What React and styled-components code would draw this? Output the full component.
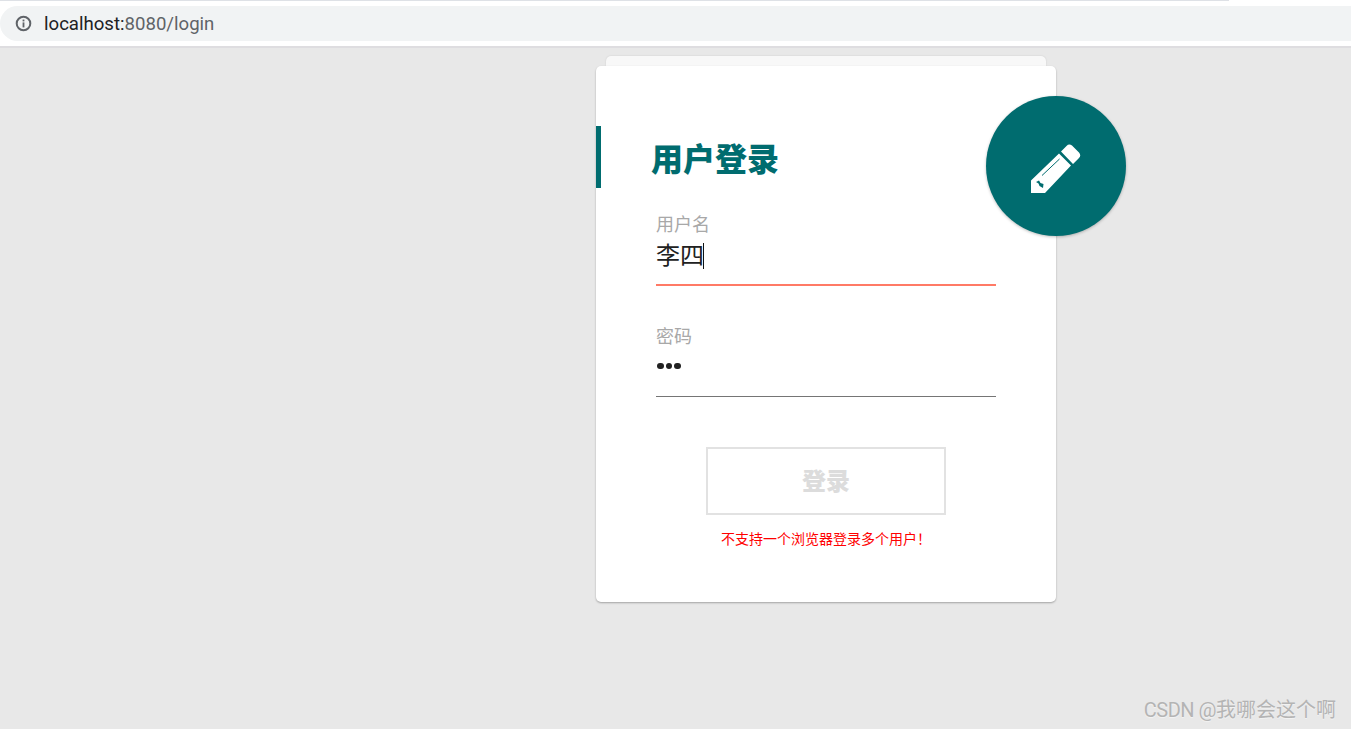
import React from 'react';
import styled, { createGlobalStyle } from 'styled-components';

const GlobalStyle = createGlobalStyle`
  html, body {
    margin: 0;
    padding: 0;
    height: 100%;
    background: #e8e8e8;
  }
  body {
    font-family: "Roboto", "Noto Sans CJK SC", sans-serif;
    overflow: hidden;
  }
`;

const Page = styled.div`
  position: relative;
  display: flex;
  flex-direction: column;
  height: 729px;
  background: #e8e8e8;
`;

const BrowserBar = styled.div`
  flex: none;
  height: 48px;
  box-sizing: border-box;
  background: #fff;
  border-bottom: 2px solid #dedde0;
  padding-top: 6px;
`;

const LoadLine = styled.div`
  position: absolute;
  top: 0;
  left: 0;
  width: 1229px;
  height: 1px;
  background: #dee1e6;
`;

const AddressPill = styled.div`
  display: flex;
  align-items: center;
  height: 35px;
  padding-left: 15px;
  background: #f1f3f4;
  border-radius: 18px 0 0 18px;
`;

const InfoIcon = styled.svg`
  width: 17px;
  height: 17px;
  margin-right: 12px;
`;

const Url = styled.span`
  font-family: "Roboto", sans-serif;
  font-size: 18.6px;
  color: #202124;
`;

const UrlRest = styled.span`
  color: #5f6368;
`;

const Main = styled.main`
  flex: 1;
  padding: 8px 0 0 596px;
`;

const CardStack = styled.div`
  position: relative;
  width: 460px;
`;

const BackCard = styled.div`
  height: 10px;
  margin: 0 10px;
  background: #f8f8f8;
  border-radius: 5px 5px 0 0;
  box-shadow: 0 0 2px rgba(0, 0, 0, 0.12);
`;

const Card = styled.section`
  position: relative;
  box-sizing: border-box;
  height: 536px;
  padding-top: 60px;
  background: #fff;
  border-radius: 5px;
  box-shadow: 0 1px 2px rgba(0, 0, 0, 0.3);
`;

const Title = styled.h1`
  box-sizing: border-box;
  height: 62px;
  margin: 0 0 25px;
  padding-left: 50px;
  border-left: 5px solid #006c6f;
  font-size: 32px;
  line-height: 68px;
  font-weight: 900;
  color: #006c6f;
`;

const Form = styled.form`
  padding: 0 60px;
`;

const Field = styled.div`
  height: ${(p) => (p.$active ? '73px' : '72px')};
  margin-bottom: 39px;
  border-bottom: ${(p) => (p.$active ? '2px solid #ff7a66' : '1px solid #757575')};
  box-sizing: border-box;
`;

const Label = styled.div`
  font-size: 18px;
  line-height: 24px;
  height: 24px;
  color: #a8a8a8;
`;

const Value = styled.div`
  display: flex;
  align-items: center;
  font-size: 24px;
  line-height: 38px;
  height: 38px;
  color: #212121;
`;

const Caret = styled.span`
  width: 1px;
  height: 26px;
  margin-left: -1px;
  background: #111;
`;

const Dots = styled.div`
  display: flex;
  gap: 2px;
  height: 34px;
  margin-left: 1px;
  align-items: center;
`;

const Dot = styled.span`
  width: 6.5px;
  height: 6.5px;
  border-radius: 50%;
  background: #212121;
`;

const SubmitButton = styled.button`
  display: block;
  box-sizing: border-box;
  width: 240px;
  height: 68px;
  margin: 50px auto 0;
  padding: 0 0 4px;
  background: #fff;
  border: 2px solid #e2e2e2;
  font-family: inherit;
  font-size: 24px;
  font-weight: 900;
  color: #dcdcdc;
`;

const Notice = styled.p`
  margin: 15px 0 0;
  text-align: center;
  font-size: 14px;
  line-height: 18px;
  color: #ff0000;
`;

const Fab = styled.div`
  position: absolute;
  top: 30px;
  right: -70px;
  display: flex;
  align-items: center;
  justify-content: center;
  width: 140px;
  height: 140px;
  border-radius: 50%;
  background: #006c6f;
  box-shadow: 0 1px 3px rgba(0, 0, 0, 0.25);
`;

const PencilIcon = styled.svg`
  width: 60px;
  height: 60px;
`;

const Watermark = styled.div`
  position: absolute;
  right: 15px;
  bottom: 6px;
  font-size: 20px;
  line-height: 26px;
  color: #b4b4b4;
  text-shadow: 0 1px 1px rgba(255, 255, 255, 0.5);
`;

const WatermarkLatin = styled.span`
  letter-spacing: -0.5px;
`;

export default function App() {
  return (
    <Page>
      <GlobalStyle />
      <BrowserBar>
        <LoadLine />
        <AddressPill>
          <InfoIcon viewBox="0 0 17 17">
            <circle cx="8.5" cy="8.5" r="6.8" fill="none" stroke="#5f6368" strokeWidth="2" />
            <rect x="7.6" y="7.4" width="1.8" height="5" fill="#5f6368" />
            <rect x="7.6" y="4.6" width="1.8" height="1.8" fill="#5f6368" />
          </InfoIcon>
          <Url>
            localhost:<UrlRest>8080/login</UrlRest>
          </Url>
        </AddressPill>
      </BrowserBar>
      <Main>
        <CardStack>
          <BackCard />
          <Card>
            <Title>用户登录</Title>
            <Form>
              <Field $active>
                <Label>用户名</Label>
                <Value>
                  李四
                  <Caret />
                </Value>
              </Field>
              <Field>
                <Label>密码</Label>
                <Dots>
                  <Dot />
                  <Dot />
                  <Dot />
                </Dots>
              </Field>
              <SubmitButton type="button">登录</SubmitButton>
              <Notice>不支持一个浏览器登录多个用户！</Notice>
            </Form>
            <Fab>
              <PencilIcon viewBox="0 -4 60 60">
                <path
                  fill="#fff"
                  d="M5 40.5 L33 13.5 L45 25.5 L19 53 L5 53 Z M35 11.5 L40.5 6 Q43 3.5 46 5.5 L53 12.5 Q55.5 15.5 53 18 L47 24 Z"
                />
                <path fill="none" stroke="#006c6f" strokeWidth="1" d="M33.5 19 L16 35.5" />
                <path fill="#006c6f" d="M10 42 L13 40.5 L14.5 43 L17.5 44 L17 48 L13.5 46 L12.5 43.5 Z" />
              </PencilIcon>
            </Fab>
          </Card>
        </CardStack>
      </Main>
      <Watermark>
        <WatermarkLatin>CSDN @</WatermarkLatin>我哪会这个啊
      </Watermark>
    </Page>
  );
}
